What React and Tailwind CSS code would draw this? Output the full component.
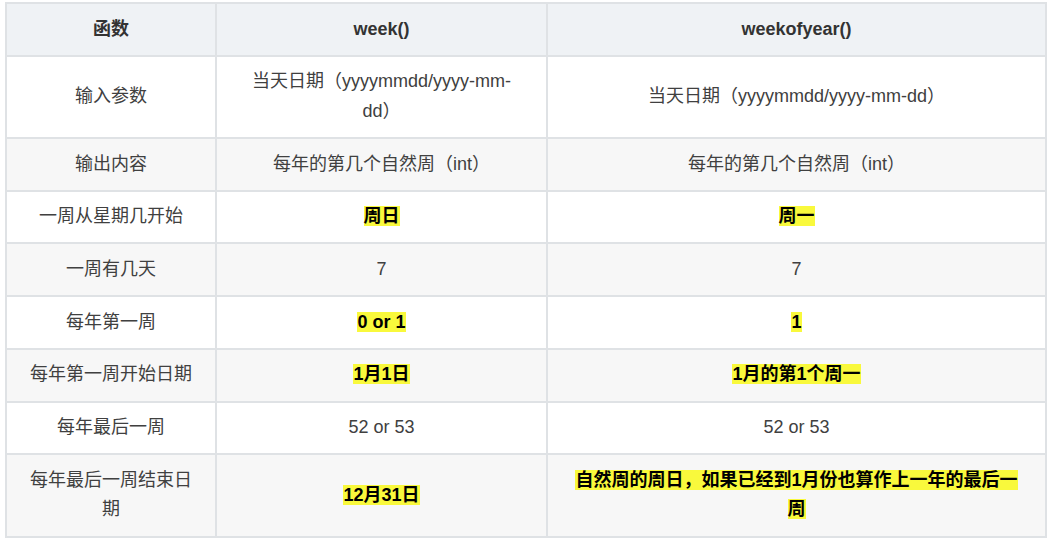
const rows = [
  { label: '输入参数', a: '当天日期（yyyymmdd/yyyy-mm-dd）', b: '当天日期（yyyymmdd/yyyy-mm-dd）' },
  { label: '输出内容', a: '每年的第几个自然周（int）', b: '每年的第几个自然周（int）' },
  { label: '一周从星期几开始', a: '周日', b: '周一', mark: true },
  { label: '一周有几天', a: '7', b: '7' },
  { label: '每年第一周', a: '0 or 1', b: '1', mark: true },
  { label: '每年第一周开始日期', a: '1月1日', b: '1月的第1个周一', mark: true },
  { label: '每年最后一周', a: '52 or 53', b: '52 or 53' },
  { label: '每年最后一周结束日期', a: '12月31日', b: '自然周的周日，如果已经到1月份也算作上一年的最后一周', mark: true },
];

function Cell({ children, mark }) {
  return (
    <td className="border border-[#dfe2e5] px-[21px] py-[10.5px] text-center align-middle">
      {mark ? (
        <span className="bg-[#f9f93c] font-bold text-black">{children}</span>
      ) : (
        children
      )}
    </td>
  );
}

export default function App() {
  return (
    <div className="bg-white w-[1053px] h-[543px] pl-[5px] pt-[2px]">
      <table
        className="border-separate border-spacing-0 border border-[#dfe2e5] w-[1042px] table-fixed text-[18px] leading-[1.65] text-[#404040]"
        style={{ fontFamily: '"Liberation Sans", "Noto Sans CJK SC", sans-serif' }}
      >
        <colgroup>
          <col className="w-[210px]" />
          <col className="w-[331px]" />
          <col />
        </colgroup>
        <thead>
          <tr className="bg-[#eff2f5]">
            <th className="border border-[#dfe2e5] px-[21px] py-[10.5px] font-bold text-[#333]">函数</th>
            <th className="border border-[#dfe2e5] px-[21px] py-[10.5px] font-bold text-[#333]">week()</th>
            <th className="border border-[#dfe2e5] px-[21px] py-[10.5px] font-bold text-[#333]">weekofyear()</th>
          </tr>
        </thead>
        <tbody>
          {rows.map((r, i) => (
            <tr key={r.label} className={i % 2 === 1 ? 'bg-[#f7f7f7]' : 'bg-white'}>
              <Cell>{r.label}</Cell>
              <Cell mark={r.mark}>{r.a}</Cell>
              <Cell mark={r.mark}>{r.b}</Cell>
            </tr>
          ))}
        </tbody>
      </table>
    </div>
  );
}
